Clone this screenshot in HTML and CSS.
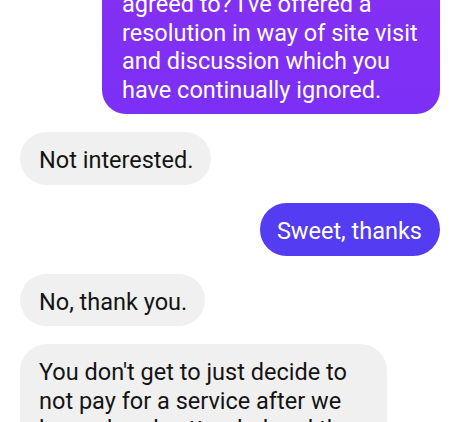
FILE: index.html
```html
<!DOCTYPE html>
<html>
<head>
<meta charset="utf-8">
<link rel="stylesheet" href="styles.css">
</head>
<body>
<div class="chat">
  <div class="bubble out first">agreed to? I've offered a resolution in way of site visit and discussion which you have continually ignored.</div>
  <div class="bubble in">Not interested.</div>
  <div class="bubble out blue">Sweet, thanks</div>
  <div class="bubble in">No, thank you.</div>
  <div class="bubble in wide">You don't get to just decide to not pay for a service after we have already attended and then</div>
</div>
</body>
</html>
```

FILE: styles.css
```css
html, body {
  margin: 0;
  padding: 0;
  background: #ffffff;
  overflow: hidden;
}
body {
  width: 475px;
  height: 422px;
}
.chat {
  display: flex;
  flex-direction: column;
  gap: 18px;
  padding: 0 35px 0 20px;
  font-family: Roboto, "Noto Sans", sans-serif;
  font-size: 23.5px;
  line-height: 28.6px;
}
.bubble {
  padding: 14px 18px 10px 19px;
  border-radius: 27px;
  box-sizing: border-box;
}
.in {
  align-self: flex-start;
  background: #f0f0f0;
  color: #141414;
  max-width: 367px;
}
.out {
  align-self: flex-end;
  color: #ffffff;
  background: #5a3cf3;
}
.first {
  width: 338px;
  margin-top: -40px;
  padding: 30px 18px 10px 20px;
  border-radius: 0 0 24px 24px;
  background: linear-gradient(180deg, #8630f2 0%, #7c2ff6 100%);
}
.blue {
  background: #533cf2;
  padding-left: 17px;
}
.wide {
  width: 367px;
}
```
